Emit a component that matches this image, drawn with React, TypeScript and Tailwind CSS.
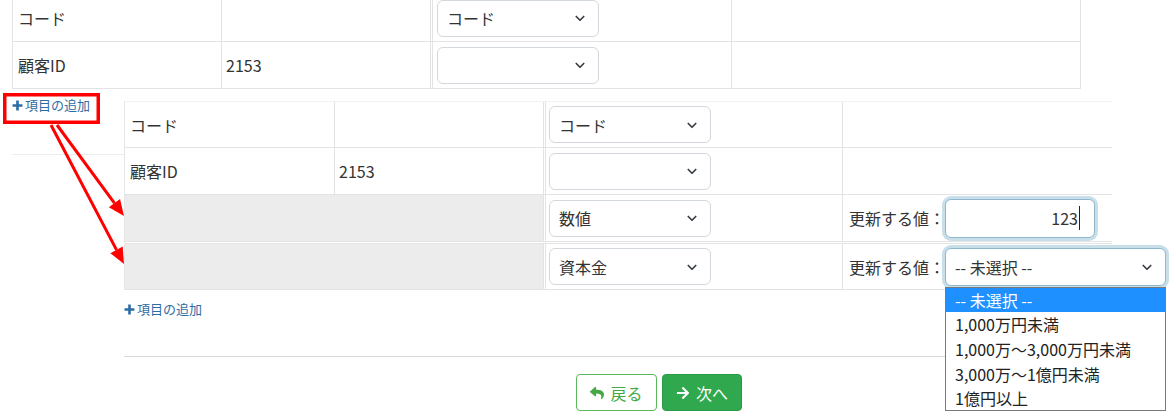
import React from 'react';
import { FaReply, FaArrowRight } from 'react-icons/fa';

const Chevron = () => (
  <svg width="12" height="12" viewBox="0 0 16 16" fill="none" stroke="#343a40" strokeWidth="2.2" strokeLinecap="round" strokeLinejoin="round">
    <path d="M3 6l5 5 5-5" />
  </svg>
);

const FakeSelect: React.FC<{ value?: string; className?: string }> = ({ value = '', className = '' }) => (
  <div className={`w-[162px] h-[37px] shrink-0 flex items-center justify-between pl-[9px] pr-[12px] border border-[#d3d8de] rounded-[6px] bg-white ${className}`}>
    <span className="text-[16px] leading-none text-[#333]">{value}</span>
    <Chevron />
  </div>
);

const AddLink: React.FC = () => (
  <div className="flex items-center gap-[2px] text-[13px] leading-[18px] text-[#2e6da4]">
    <svg width="11" height="11" viewBox="0 0 10 10" className="shrink-0">
      <path d="M5 0.5v9M0.5 5h9" stroke="#2e6da4" strokeWidth="2.4" />
    </svg>
    <span>項目の追加</span>
  </div>
);

const options = ['-- 未選択 --', '1,000万円未満', '1,000万～3,000万円未満', '3,000万～1億円未満', '1億円以上'];

export default function App() {
  return (
    <div className="relative w-[1171px] h-[420px] overflow-hidden bg-white text-[#333] font-['Noto_Sans_CJK_JP','Noto_Sans',sans-serif]">
      {/* underlying table (cut off at top) */}
      <div className="ml-[12px] mt-[-5px] w-[1069px] border-x border-b border-[#e3e3e3] text-[16px]">
        <div className="flex h-[47px] border-b border-[#e3e3e3]">
          <div className="w-[209px] border-r border-[#e3e3e3] flex items-center pl-[5px]">コード</div>
          <div className="w-[208px]" />
          <div className="w-[302px] border-l-[3px] border-double border-r border-[#e3e3e3] flex items-center pl-[4px]">
            <FakeSelect value="コード" />
          </div>
          <div className="flex-1" />
        </div>
        <div className="flex h-[46px]">
          <div className="w-[209px] border-r border-[#e3e3e3] flex items-center pl-[5px]">顧客ID</div>
          <div className="w-[208px] flex items-center pl-[4px]">2153</div>
          <div className="w-[302px] border-l-[3px] border-double border-r border-[#e3e3e3] flex items-center pl-[4px]">
            <FakeSelect />
          </div>
          <div className="flex-1" />
        </div>
      </div>

      <div className="flex">
        {/* left strip */}
        <div className="w-[124px] shrink-0">
          <div className="pl-[12px] pt-[7px]">
            <AddLink />
          </div>
          <div className="ml-[12px] mt-[40px] border-t border-[#ececec]" />
        </div>

        {/* zoomed panel */}
        <div className="w-[988px] shrink-0 mt-[12px]">
          <div className="border-l border-t border-[#e6e6e6] border-t-[#f2f2f2] text-[16px]">
            <div className="flex h-[46px] border-b border-[#e3e3e3]">
              <div className="w-[210px] border-r border-[#e3e3e3] flex items-center pl-[5px]">コード</div>
              <div className="w-[208px]" />
              <div className="w-[300px] border-l-[3px] border-double border-r border-[#e3e3e3] flex items-center pl-[3px]">
                <FakeSelect value="コード" />
              </div>
              <div className="w-[269px]" />
            </div>
            <div className="flex h-[47px] border-b border-[#e3e3e3]">
              <div className="w-[210px] border-r border-[#e3e3e3] flex items-center pl-[5px]">顧客ID</div>
              <div className="w-[208px] flex items-center pl-[4px]">2153</div>
              <div className="w-[300px] border-l-[3px] border-double border-r border-[#e3e3e3] flex items-center pl-[3px]">
                <FakeSelect />
              </div>
              <div className="w-[269px]" />
            </div>
            <div className="flex h-[49px] border-b-[3px] border-double border-[#e3e3e3]">
              <div className="w-[418px] bg-[#ececec]" />
              <div className="w-[300px] border-l-[3px] border-double border-r border-[#e3e3e3] flex items-center pl-[3px]">
                <FakeSelect value="数値" />
              </div>
              <div className="w-[269px] flex items-center pl-[6px] overflow-visible">
                <span className="w-[96px] shrink-0 whitespace-nowrap">更新する値：</span>
                <div className="w-[150px] h-[39px] shrink-0 flex items-center justify-end pr-[14px] border border-[#8fb7cd] rounded-[6px] ring-[3px] ring-[#c8dfea] bg-white">
                  <span className="leading-none">123</span>
                  <span className="w-px h-[24px] bg-[#222] ml-[1px]" />
                </div>
              </div>
            </div>
            <div className="flex h-[46px] border-b border-[#e3e3e3]">
              <div className="w-[418px] bg-[#ececec]" />
              <div className="w-[300px] border-l-[3px] border-double border-r border-[#e3e3e3] flex items-center pl-[3px]">
                <FakeSelect value="資本金" />
              </div>
              <div className="w-[269px] flex items-center pl-[6px] overflow-visible">
                <span className="w-[96px] shrink-0 whitespace-nowrap">更新する値：</span>
                <div className="relative shrink-0">
                  <div className="w-[221px] h-[38px] flex items-center justify-between pl-[9px] pr-[12px] border border-[#8fb7cd] rounded-[6px] ring-[3px] ring-[#c8dfea] bg-white">
                    <span className="leading-none">-- 未選択 --</span>
                    <Chevron />
                  </div>
                  <div className="absolute z-10 left-0 top-[39px] w-[221px] bg-white border border-[#7a7a7a] text-[16px]">
                    {options.map((o, i) => (
                      <div
                        key={o}
                        className={`h-[24.6px] flex items-center pl-[9px] whitespace-nowrap ${i === 0 ? 'bg-[#1e90ff] text-white' : 'text-[#222]'}`}
                      >
                        {o}
                      </div>
                    ))}
                  </div>
                </div>
              </div>
            </div>
          </div>

          <div className="mt-[10px]">
            <AddLink />
          </div>
          <div className="mt-[38px] border-t border-[#d9d9d9]" />
          <div className="mt-[17px] pl-[452px] flex gap-[5px]">
            <button className="w-[81px] h-[37px] flex items-center justify-center gap-[6px] border border-[#5cb85c] rounded-[4px] bg-white text-[#45a845] text-[16px]">
              <FaReply className="w-[14px] h-[14px]" />
              <span>戻る</span>
            </button>
            <button className="w-[80px] h-[37px] flex items-center justify-center gap-[6px] border border-[#2b9a45] rounded-[4px] bg-[#30a84e] text-white text-[16px]">
              <FaArrowRight className="w-[14px] h-[14px]" />
              <span>次へ</span>
            </button>
          </div>
        </div>
      </div>

      {/* annotation overlay */}
      <svg className="absolute left-0 top-0 pointer-events-none" width="1171" height="420">
        <rect x="4.75" y="94.75" width="93.5" height="27.5" fill="none" stroke="#ff0000" strokeWidth="3.5" />
        <line x1="57" y1="125" x2="114.45" y2="203.17" stroke="#ff0000" strokeWidth="3" />
        <polygon points="124,216 108.84,207.35 120.06,198.99" fill="#ff0000" />
        <line x1="51" y1="125" x2="116.52" y2="249.86" stroke="#ff0000" strokeWidth="3" />
        <polygon points="124,264 110.33,253.13 122.71,246.59" fill="#ff0000" />
      </svg>
    </div>
  );
}
